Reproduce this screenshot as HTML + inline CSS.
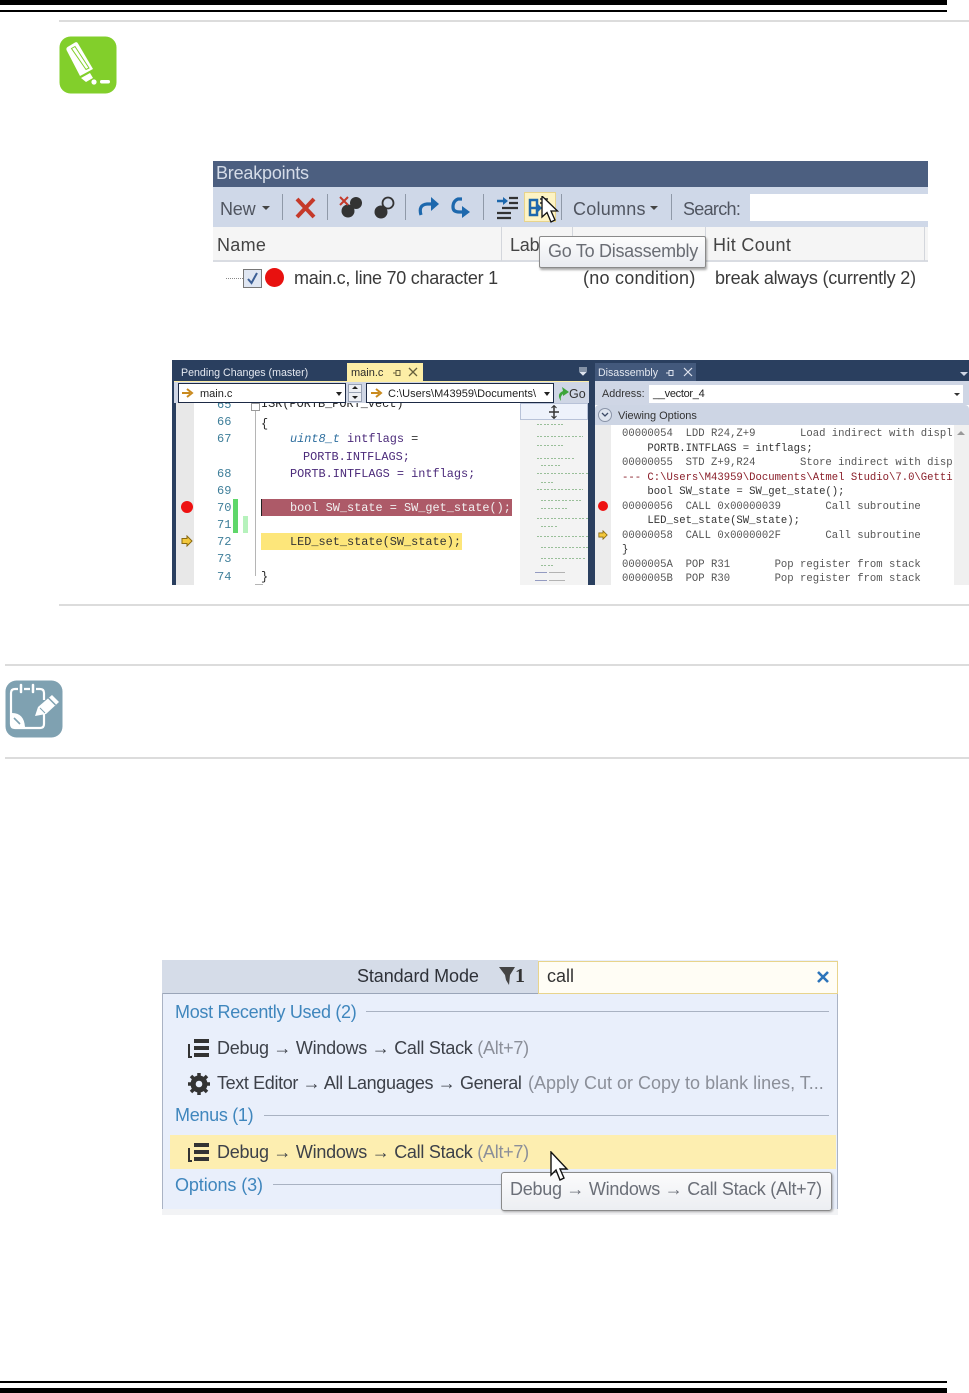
<!DOCTYPE html>
<html><head><meta charset="utf-8">
<style>
html,body{margin:0;padding:0;background:#fff}
#p{position:relative;width:969px;height:1393px;overflow:hidden;background:#fff;font-family:"Liberation Sans",sans-serif}
#p div,#p svg{position:absolute}
.t{white-space:nowrap;line-height:1}
.m{font-family:"Liberation Mono",monospace;font-size:11.88px;white-space:nowrap;line-height:1;color:#333}
.d{font-family:"Liberation Mono",monospace;font-size:10.6px;white-space:nowrap;line-height:1;color:#555}
.n{font-family:"Liberation Mono",monospace;font-size:12px;color:#3f7f9a;line-height:1}
.b{font-size:18px;color:#444;white-space:nowrap;line-height:1;letter-spacing:-.2px}
.q{font-size:18px;color:#3d4149;white-space:nowrap;line-height:1;letter-spacing:-.27px}
.h{font-size:18px;color:#3f86bd;white-space:nowrap;line-height:1;letter-spacing:-.3px}
.g{color:#8b8f99}
.r{background:#dcdcdc;height:2px}
.mm{height:1px;opacity:.6;background:repeating-linear-gradient(90deg,#5d9c5d 0 2px,transparent 2px 3px,#5d9c5d 3px 5px,transparent 5px 7px)}
pre{margin:0;font:inherit}
</style></head><body><div id="p">

<div style="left:0;top:0;width:947px;height:5px;background:#000"></div>
<div style="left:0;top:10px;width:947px;height:2px;background:#000"></div>
<div class="r" style="left:59px;top:20px;width:910px"></div>

<svg style="left:59px;top:36px" width="58" height="58" viewBox="0 0 58 58">
<rect x="0.5" y="0.5" width="57" height="57" rx="11" fill="#82cf2b"/>
<path d="M8.500 11 L16 6.500 Q18 5.500 19 7.500 L34 33 L21 40 L7.500 14 Q7 12 8.500 11Z" fill="#fff"/>
<path d="M12.500 12.500 L16 10.500 L30 32 L27 33.500Z" fill="none" stroke="#82cf2b" stroke-width="1"/>
<path d="M22 42 L31 37 L34 42 L27 46Z" fill="#fff"/>
<circle cx="35" cy="46" r="2.600" fill="#fff"/>
<rect x="41" y="44" width="10" height="3.500" rx="1.700" fill="#fff"/>
</svg>

<!-- Breakpoints -->
<div style="left:213px;top:161px;width:715px;height:26px;background:#4c5f80"></div>
<div class="t" style="left:216px;top:164px;font-size:18px;color:#d5dce8;letter-spacing:-.2px">Breakpoints</div>
<div style="left:213px;top:187px;width:715px;height:40px;background:#cfd8e8"></div>
<div class="b" style="left:220px;top:200px;color:#505560">New</div>
<div style="left:262px;top:206px;width:0;height:0;border:4px solid transparent;border-top:4px solid #444"></div>
<div style="left:282px;top:194px;width:1px;height:26px;background:#8f99a8"></div>
<svg style="left:294px;top:196px" width="24" height="24" viewBox="0 0 24 24"><path d="M3 3 L20 21 M20 3 L3 21" stroke="#c5392a" stroke-width="4"/></svg>
<div style="left:327px;top:194px;width:1px;height:26px;background:#8f99a8"></div>
<svg style="left:338px;top:194px" width="60" height="26" viewBox="0 0 60 26">
<circle cx="10" cy="17" r="6.500" fill="#333"/><circle cx="18" cy="9" r="6" fill="#333"/><path d="M2 3 L10 11 M10 3 L2 11" stroke="#c5392a" stroke-width="2"/>
<circle cx="43" cy="18" r="6.500" fill="#333"/><circle cx="50" cy="9" r="5.500" fill="none" stroke="#333" stroke-width="1.800"/>
</svg>
<div style="left:405px;top:194px;width:1px;height:26px;background:#8f99a8"></div>
<svg style="left:415px;top:194px" width="60" height="26" viewBox="0 0 60 26" fill="none">
<path d="M6 21 Q3 11 12 10 H19" stroke="#1d68ad" stroke-width="3.200"/><path d="M16 3 L24 10 L16 17Z" fill="#1d68ad"/>
<path d="M47 5 H43 Q38 7 38 13 Q38 18 44 18 H49" stroke="#1d68ad" stroke-width="3.200"/><path d="M47 12 L55 18 L47 24Z" fill="#1d68ad"/>
</svg>
<div style="left:483px;top:194px;width:1px;height:26px;background:#8f99a8"></div>
<svg style="left:495px;top:195px" width="26" height="26" viewBox="0 0 26 26"><path d="M2 6 H9" stroke="#1d68ad" stroke-width="2.500"/><path d="M8 2 L13 6 L8 10Z" fill="#1d68ad"/><path d="M14 3 H23 M14 8 H23 M7 13 H23 M2 18 H16 M2 23 H16" stroke="#333" stroke-width="2.200"/></svg>
<div style="left:524px;top:192px;width:32px;height:30px;background:#fdf3c4;border:1px solid #e8d48c;box-sizing:border-box"></div>
<svg style="left:528px;top:196px" width="36" height="32" viewBox="0 0 36 32"><path d="M2 4 H9 V19 H2Z" fill="none" stroke="#1d68ad" stroke-width="2.500"/><path d="M3 12 H10" stroke="#1d68ad" stroke-width="2.500"/><path d="M9 7 L14 12 L9 17Z" fill="#1d68ad"/><path d="M12 3 H20 M12 7 H20" stroke="#444" stroke-width="1.800"/>
<path d="M14 0 L14 21 L19 16.500 L23 26 L27 24 L23 15 L29.500 15Z" fill="#fff" stroke="#111" stroke-width="1.300"/></svg>
<div style="left:561px;top:194px;width:1px;height:26px;background:#8f99a8"></div>
<div class="b" style="left:573px;top:200px;color:#505560;letter-spacing:.25px">Columns</div>
<div style="left:650px;top:206px;width:0;height:0;border:4px solid transparent;border-top:4px solid #444"></div>
<div style="left:671px;top:194px;width:1px;height:26px;background:#8f99a8"></div>
<div class="b" style="left:683px;top:200px;color:#505560;letter-spacing:-.7px">Search:</div>
<div style="left:750px;top:194px;width:178px;height:27px;background:#fff"></div>

<div style="left:213px;top:227px;width:715px;height:35px;background:#f5f5f5;border-bottom:2px solid #d9dce2;box-sizing:border-box"></div>
<div style="left:501px;top:227px;width:1px;height:34px;background:#d3d6dc"></div>
<div style="left:572px;top:227px;width:1px;height:34px;background:#d3d6dc"></div>
<div style="left:705px;top:227px;width:1px;height:34px;background:#d3d6dc"></div>
<div style="left:924px;top:227px;width:1px;height:34px;background:#d3d6dc"></div>
<div class="b" style="left:217px;top:236px;letter-spacing:.3px">Name</div>
<div class="b" style="left:510px;top:236px">Lab</div>
<div class="b" style="left:713px;top:236px;letter-spacing:.35px">Hit Count</div>
<div style="left:226px;top:278px;width:17px;border-top:1px dotted #888"></div>
<div style="left:243px;top:269px;width:19px;height:19px;box-sizing:border-box;background:#dfe6f2;border:1px solid #777"></div>
<svg style="left:243px;top:269px" width="19" height="19" viewBox="0 0 19 19"><path d="M5 10 L8.500 14 L14 4" stroke="#3c5f96" stroke-width="2" fill="none"/></svg>
<div style="left:265px;top:268px;width:19px;height:19px;border-radius:50%;background:#e8110f"></div>
<div class="b" style="left:294px;top:269px;color:#3a3a3a;letter-spacing:-.27px">main.c, line 70 character 1</div>
<div class="b" style="left:583px;top:269px;color:#3a3a3a;letter-spacing:.25px">(no condition)</div>
<div class="b" style="left:715px;top:269px;color:#3a3a3a">break always (currently 2)</div>
<div style="left:539px;top:236px;width:167px;height:32px;box-sizing:border-box;background:linear-gradient(#fdfdfd,#e9ebf0);border:1px solid #8a8a8a;border-radius:2px;box-shadow:1px 2px 2px rgba(0,0,0,.35)"></div>
<div class="b" style="left:548px;top:242px;color:#6a6d74;letter-spacing:-.28px">Go To Disassembly</div>

<!-- Editor -->
<div style="left:172px;top:360px;width:797px;height:225px;background:#2a3f5f"></div>
<div class="t" style="left:181px;top:368px;font-size:10.65px;color:#e4e8f0">Pending Changes (master)</div>
<div style="left:347px;top:363px;width:76px;height:18px;background:#fdeea6"></div>
<div class="t" style="left:351px;top:368px;font-size:11px;color:#2a2a2a">main.c</div>
<svg style="left:392px;top:369px" width="10" height="8" viewBox="0 0 10 8"><path d="M1 4 H4 M4 1.500 H8 V6.500 H4Z M4 1 V7" stroke="#665f3c" fill="none"/></svg>
<svg style="left:408px;top:367px" width="10" height="10" viewBox="0 0 10 10"><path d="M1 1 L9 9 M9 1 L1 9" stroke="#665f3c" stroke-width="1.300"/></svg>
<svg style="left:578px;top:367px" width="10" height="10" viewBox="0 0 10 10"><path d="M1 1 H9 M1 3 H9 M2 5 H8 L5 8Z" stroke="#dfe4ee" fill="#dfe4ee"/></svg>
<div style="left:174px;top:381px;width:415px;height:1px;background:#fdeea6"></div>
<div style="left:176px;top:403px;width:344px;height:182px;background:#fff"></div>
<div style="left:176px;top:403px;width:18px;height:182px;background:#e8e8e8"></div>
<div style="left:520px;top:403px;width:68px;height:182px;background:#f3f3f3"></div>
<div style="left:255px;top:403px;width:1px;height:173px;background:#b5b5b5"></div>
<div style="left:255px;top:584px;width:8px;height:1px;background:#b5b5b5"></div>

<div style="left:194px;top:403px;width:326px;height:12px;overflow:hidden">
  <div class="n" style="left:23px;top:-4px">65</div>
  <div class="m" style="left:67px;top:-4px;color:#222">ISR(PORTB_PORT_vect)</div>
</div>
<div style="left:251px;top:403px;width:9px;height:8px;background:#fff;border:1px solid #999;box-sizing:border-box"></div>
<div style="left:174px;top:382px;width:415px;height:21px;background:#cfd6e5"></div>
<div style="left:178px;top:383px;width:168px;height:20px;box-sizing:border-box;background:#fff;border:1px solid #1d2a45"></div>
<svg style="left:182px;top:388px" width="12" height="10" viewBox="0 0 12 10"><path d="M0 5 H8 M5 1 L10 5 L5 9" stroke="#c98a1e" stroke-width="2" fill="none"/></svg>
<div class="t" style="left:200px;top:389px;font-size:11px;color:#222">main.c</div>
<div style="left:336px;top:392px;width:0;height:0;border:3.500px solid transparent;border-top:4px solid #222"></div>
<div style="left:348px;top:384px;width:14px;height:18px;background:#eef0f5;border:1px solid #9aa3b5;box-sizing:border-box"></div>
<div style="left:352px;top:386px;width:0;height:0;border:3px solid transparent;border-bottom:3px solid #222;border-top:0"></div>
<div style="left:352px;top:396px;width:0;height:0;border:3px solid transparent;border-top:3px solid #222;border-bottom:0"></div>
<div style="left:349px;top:392px;width:12px;height:1px;background:#9aa3b5"></div>
<div style="left:366px;top:383px;width:188px;height:20px;box-sizing:border-box;background:#fff;border:1px solid #1d2a45"></div>
<svg style="left:371px;top:388px" width="12" height="10" viewBox="0 0 12 10"><path d="M0 5 H8 M5 1 L10 5 L5 9" stroke="#c98a1e" stroke-width="2" fill="none"/></svg>
<div class="t" style="left:388px;top:389px;font-size:11px;color:#222;letter-spacing:.03px">C:\Users\M43959\Documents\</div>
<div style="left:544px;top:392px;width:0;height:0;border:3.500px solid transparent;border-top:4px solid #222"></div>
<svg style="left:556px;top:385px" width="14" height="17" viewBox="0 0 14 17"><path d="M5 16 Q0 9 7 6 L6 2 L13 7 L7 11 L7 9 Q4 11 5 16Z" fill="#3da53a"/></svg>
<div class="t" style="left:569px;top:388px;font-size:12.500px;color:#333">Go</div>
<div style="left:520px;top:403px;width:68px;height:17px;background:#eef2fb;border:1px solid #b8c2d8;box-sizing:border-box"></div>
<svg style="left:548px;top:405px" width="12" height="14" viewBox="0 0 12 14"><path d="M6 1 V13 M1 7 H11" stroke="#333" stroke-width="1.500"/><path d="M3.500 3 L6 0.500 L8.500 3 M3.500 11 L6 13.500 L8.500 11" stroke="#333" fill="none"/></svg>

<div class="n" style="left:217px;top:416px">66</div>
<div class="n" style="left:217px;top:433px">67</div>
<div class="n" style="left:217px;top:468px">68</div>
<div class="n" style="left:217px;top:485px">69</div>
<div class="n" style="left:217px;top:502px">70</div>
<div class="n" style="left:217px;top:519px">71</div>
<div class="n" style="left:217px;top:536px">72</div>
<div class="n" style="left:217px;top:553px">73</div>
<div class="n" style="left:217px;top:571px">74</div>
<div class="m" style="left:261px;top:419px;color:#222">{</div>
<div class="m" style="left:290px;top:434px"><i style="color:#2f6f9f">uint8_t</i> <span style="color:#4b2a7a">intflags</span> =</div>
<div class="m" style="left:303px;top:452px;color:#4b2a7a">PORTB.INTFLAGS;</div>
<div class="m" style="left:290px;top:469px;color:#4b2a7a">PORTB.INTFLAGS = intflags;</div>

<div style="left:233px;top:499px;width:5px;height:34px;background:#5fd76a"></div>
<div style="left:243px;top:516px;width:5px;height:17px;background:#b6f2bc"></div>
<div style="left:261px;top:499px;width:251px;height:17px;background:#ad5a68"></div>
<div style="left:261px;top:499px;width:1px;height:17px;background:#222"></div>
<div class="m" style="left:290px;top:503px;color:#f2f2f2">bool SW_state = SW_get_state();</div>
<div style="left:261px;top:533px;width:201px;height:17px;background:#fde67a"></div>
<div class="m" style="left:290px;top:537px;color:#333">LED_set_state(SW_state);</div>
<div class="m" style="left:261px;top:572px;color:#222">}</div>
<div style="left:181px;top:501px;width:12px;height:12px;border-radius:50%;background:#ee1111"></div>
<svg style="left:181px;top:535px" width="12" height="12" viewBox="0 0 12 12"><path d="M1 3.500 H6 V1 L11 6 L6 11 V8.500 H1Z" fill="#f3c83c" stroke="#8a6a10" stroke-width="1"/></svg>

<!-- minimap -->
<div class="mm" style="left:537px;top:424px;width:28px"></div>
<div class="mm" style="left:537px;top:436px;width:46px"></div>
<div class="mm" style="left:537px;top:445px;width:26px"></div>
<div class="mm" style="left:537px;top:458px;width:38px"></div>
<div class="mm" style="left:541px;top:465px;width:20px"></div>
<div class="mm" style="left:537px;top:473px;width:51px"></div>
<div class="mm" style="left:541px;top:482px;width:12px"></div>
<div class="mm" style="left:537px;top:489px;width:46px"></div>
<div class="mm" style="left:541px;top:500px;width:40px"></div>
<div class="mm" style="left:541px;top:508px;width:26px"></div>
<div class="mm" style="left:537px;top:518px;width:51px"></div>
<div class="mm" style="left:541px;top:526px;width:16px"></div>
<div class="mm" style="left:537px;top:536px;width:51px"></div>
<div class="mm" style="left:541px;top:547px;width:47px"></div>
<div class="mm" style="left:541px;top:558px;width:44px"></div>
<div class="mm" style="left:541px;top:565px;width:14px"></div>
<div style="left:535px;top:572px;width:12px;height:1px;background:#5560a0;opacity:.6"></div>
<div style="left:549px;top:572px;width:16px;height:1px;background:#888;opacity:.6"></div>
<div style="left:535px;top:580px;width:12px;height:1px;background:#5560a0;opacity:.6"></div>
<div style="left:549px;top:580px;width:16px;height:1px;background:#888;opacity:.6"></div>

<!-- Disassembly -->
<div style="left:595px;top:363px;width:101px;height:18px;background:#43597c"></div>
<div class="t" style="left:598px;top:368px;font-size:10.6px;color:#e4e8f0">Disassembly</div>
<svg style="left:665px;top:369px" width="10" height="8" viewBox="0 0 10 8"><path d="M1 4 H4 M4 1.500 H8 V6.500 H4Z M4 1 V7" stroke="#dfe4ee" fill="none"/></svg>
<svg style="left:683px;top:367px" width="10" height="10" viewBox="0 0 10 10"><path d="M1 1 L9 9 M9 1 L1 9" stroke="#dfe4ee" stroke-width="1.200"/></svg>
<div style="left:960px;top:372px;width:0;height:0;border:4px solid transparent;border-top:4px solid #cfd6e5"></div>
<div style="left:595px;top:381px;width:374px;height:204px;background:#fff"></div>
<div style="left:595px;top:381px;width:374px;height:24px;background:#cfd6e5"></div>
<div class="t" style="left:602px;top:389px;font-size:10.8px;color:#333">Address:</div>
<div style="left:649px;top:385px;width:314px;height:18px;background:#fff"></div>
<div class="t" style="left:653px;top:389px;font-size:11px;color:#222;letter-spacing:-.3px">__vector_4</div>
<div style="left:954px;top:393px;width:0;height:0;border:3px solid transparent;border-top:3px solid #333"></div>
<div style="left:595px;top:405px;width:374px;height:20px;background:#cdd5e4;border-radius:4px 4px 0 0"></div>
<div style="left:598px;top:408px;width:14px;height:14px;box-sizing:border-box;border-radius:50%;border:1px solid #8a94a8;background:#dfe5ef"></div>
<svg style="left:601px;top:412px" width="8" height="6" viewBox="0 0 8 6"><path d="M1 1 L4 4 L7 1" stroke="#3c4a66" stroke-width="1.300" fill="none"/></svg>
<div class="t" style="left:618px;top:411px;font-size:11px;color:#333;letter-spacing:-.03px">Viewing Options</div>
<div style="left:595px;top:425px;width:16px;height:160px;background:#ececec"></div>
<div style="left:954px;top:425px;width:15px;height:160px;background:#f0f0f0"></div>
<div style="left:957px;top:431px;width:0;height:0;border:4px solid transparent;border-bottom:4px solid #999;border-top:0"></div>

<div class="d" style="left:622px;top:429px"><pre>00000054  LDD R24,Z+9       Load indirect with displ</pre></div>
<div class="d" style="left:622px;top:444px;color:#333"><pre>    PORTB.INTFLAGS = intflags;</pre></div>
<div class="d" style="left:622px;top:458px"><pre>00000055  STD Z+9,R24       Store indirect with disp</pre></div>
<div class="d" style="left:622px;top:473px;color:#8a1f2a"><pre>--- C:\Users\M43959\Documents\Atmel Studio\7.0\Getti</pre></div>
<div class="d" style="left:622px;top:487px;color:#333"><pre>    bool SW_state = SW_get_state();</pre></div>
<div class="d" style="left:622px;top:502px"><pre>00000056  CALL 0x00000039       Call subroutine</pre></div>
<div class="d" style="left:622px;top:516px;color:#333"><pre>    LED_set_state(SW_state);</pre></div>
<div class="d" style="left:622px;top:531px"><pre>00000058  CALL 0x0000002F       Call subroutine</pre></div>
<div class="d" style="left:622px;top:545px;color:#333">}</div>
<div class="d" style="left:622px;top:560px"><pre>0000005A  POP R31       Pop register from stack</pre></div>
<div class="d" style="left:622px;top:574px"><pre>0000005B  POP R30       Pop register from stack</pre></div>
<div style="left:598px;top:501px;width:10px;height:10px;border-radius:50%;background:#ee1111"></div>
<svg style="left:598px;top:530px" width="10" height="10" viewBox="0 0 12 12"><path d="M1 3.500 H6 V1 L11 6 L6 11 V8.500 H1Z" fill="#f3c83c" stroke="#8a6a10"/></svg>

<div class="r" style="left:59px;top:604px;width:910px"></div>
<div class="r" style="left:5px;top:664px;width:964px"></div>

<svg style="left:5px;top:680px" width="58" height="58" viewBox="0 0 58 58">
<rect x="0.500" y="0.500" width="57" height="57" rx="11" fill="#7fa1b1"/>
<path d="M13 9 H10 Q6 9 6 13 V44 Q6 48 10 48 H35 Q39 48 39 44 V31 M19 9 H25 M31 9 H35 Q39 9 39 13 V20" fill="none" stroke="#fff" stroke-width="2.200"/>
<path d="M16 5 V12 M28 5 V12" stroke="#fff" stroke-width="2.500" stroke-linecap="round"/>
<path d="M7 33 Q19 33 20 47 L9 47 Q7 47 7 45Z" fill="#fff"/>
<path d="M9 38 L15 44" stroke="#7fa1b1" stroke-width="1.600"/>
<path d="M33 27 L47 15 L54 22 L41 34 L30 36Z" fill="#fff"/>
<path d="M43.500 18 L50.500 25" stroke="#7fa1b1" stroke-width="1.500"/>
<path d="M35 28 L40 33" stroke="#7fa1b1" stroke-width="1"/>
</svg>
<div class="r" style="left:5px;top:757px;width:964px"></div>

<!-- Quick launch -->
<div style="left:162px;top:960px;width:676px;height:255px;background:#e9effb"></div>
<div style="left:162px;top:960px;width:376px;height:33px;background:#d5dce8"></div>
<div style="left:162px;top:993px;width:676px;height:1px;background:#9aa5b8"></div>
<div style="left:162px;top:993px;width:1px;height:216px;background:#aab3c4"></div>
<div style="left:837px;top:993px;width:1px;height:216px;background:#aab3c4"></div>
<div style="left:162px;top:1209px;width:676px;height:6px;background:#f2f3f5"></div>
<div class="t" style="left:357px;top:967px;font-size:18px;color:#2e3138;letter-spacing:-.1px">Standard Mode</div>
<svg style="left:499px;top:966px" width="16" height="20" viewBox="0 0 16 20"><path d="M0 1 H16 L11 9 L10 19 L7 14 L6 9Z" fill="#444"/></svg>
<div class="t" style="left:515px;top:966px;font-size:20px;font-weight:bold;font-family:'Liberation Serif',serif;color:#333">1</div>
<div style="left:538px;top:961px;width:300px;height:33px;box-sizing:border-box;background:#fffdf5;border:1px solid #e8d48c"></div>
<div class="t" style="left:547px;top:967px;font-size:18px;color:#333">call</div>
<svg style="left:816px;top:970px" width="14" height="14" viewBox="0 0 14 14"><path d="M2 2 L12 12 M12 2 L2 12" stroke="#2c74ba" stroke-width="2.600"/></svg>

<div class="h" style="left:175px;top:1003px">Most Recently Used (2)</div>
<div style="left:366px;top:1011px;width:463px;height:1px;background:#a9b2c2"></div>
<svg style="left:188px;top:1037px" width="22" height="22" viewBox="0 0 22 22"><path d="M6 4 H21 M6 11 H21 M6 18 H21" stroke="#333" stroke-width="4"/><path d="M1 7 V20 H4" stroke="#333" stroke-width="2" fill="none"/></svg>
<div class="q" style="left:217px;top:1039px">Debug &#8594; Windows &#8594; Call Stack <span class="g">(Alt+7)</span></div>
<svg style="left:188px;top:1073px" width="22" height="22" viewBox="0 0 22 22"><circle cx="11" cy="11" r="6" fill="none" stroke="#333" stroke-width="5"/><path d="M11 0 V22 M0 11 H22 M3 3 L19 19 M19 3 L3 19" stroke="#333" stroke-width="3.500"/><circle cx="11" cy="11" r="3.300" fill="#e9effb"/></svg>
<div class="q" style="left:217px;top:1074px;letter-spacing:-.37px">Text Editor &#8594; All Languages &#8594; General</div>
<div class="q g" style="left:528px;top:1074px;letter-spacing:0">(Apply Cut or Copy to blank lines, T...</div>
<div class="h" style="left:175px;top:1106px">Menus (1)</div>
<div style="left:264px;top:1115px;width:565px;height:1px;background:#a9b2c2"></div>
<div style="left:170px;top:1135px;width:666px;height:34px;background:#fdeeb0"></div>
<svg style="left:188px;top:1141px" width="22" height="22" viewBox="0 0 22 22"><path d="M6 4 H21 M6 11 H21 M6 18 H21" stroke="#333" stroke-width="4"/><path d="M1 7 V20 H4" stroke="#333" stroke-width="2" fill="none"/></svg>
<div class="q" style="left:217px;top:1143px">Debug &#8594; Windows &#8594; Call Stack <span class="g">(Alt+7)</span></div>
<div class="h" style="left:175px;top:1176px;letter-spacing:-.1px">Options (3)</div>
<div style="left:273px;top:1184px;width:230px;height:1px;background:#a9b2c2"></div>
<div style="left:501px;top:1172px;width:331px;height:39px;box-sizing:border-box;background:linear-gradient(#fbfbfc,#eceef2);border:1px solid #8a8a8a;border-radius:3px;box-shadow:1px 1px 2px rgba(0,0,0,.3)"></div>
<div class="q" style="left:510px;top:1180px;color:#6b6f78">Debug &#8594; Windows &#8594; Call Stack (Alt+7)</div>
<svg style="left:549px;top:1151px" width="22" height="32" viewBox="0 0 22 32"><path d="M2 1 L2 24 L7 19 L11 29 L15 27 L11 18 L18 18Z" fill="#fff" stroke="#111" stroke-width="1.400"/></svg>

<div style="left:0;top:1381px;width:947px;height:2px;background:#000"></div>
<div style="left:0;top:1388px;width:947px;height:5px;background:#000"></div>
</div></body></html>
